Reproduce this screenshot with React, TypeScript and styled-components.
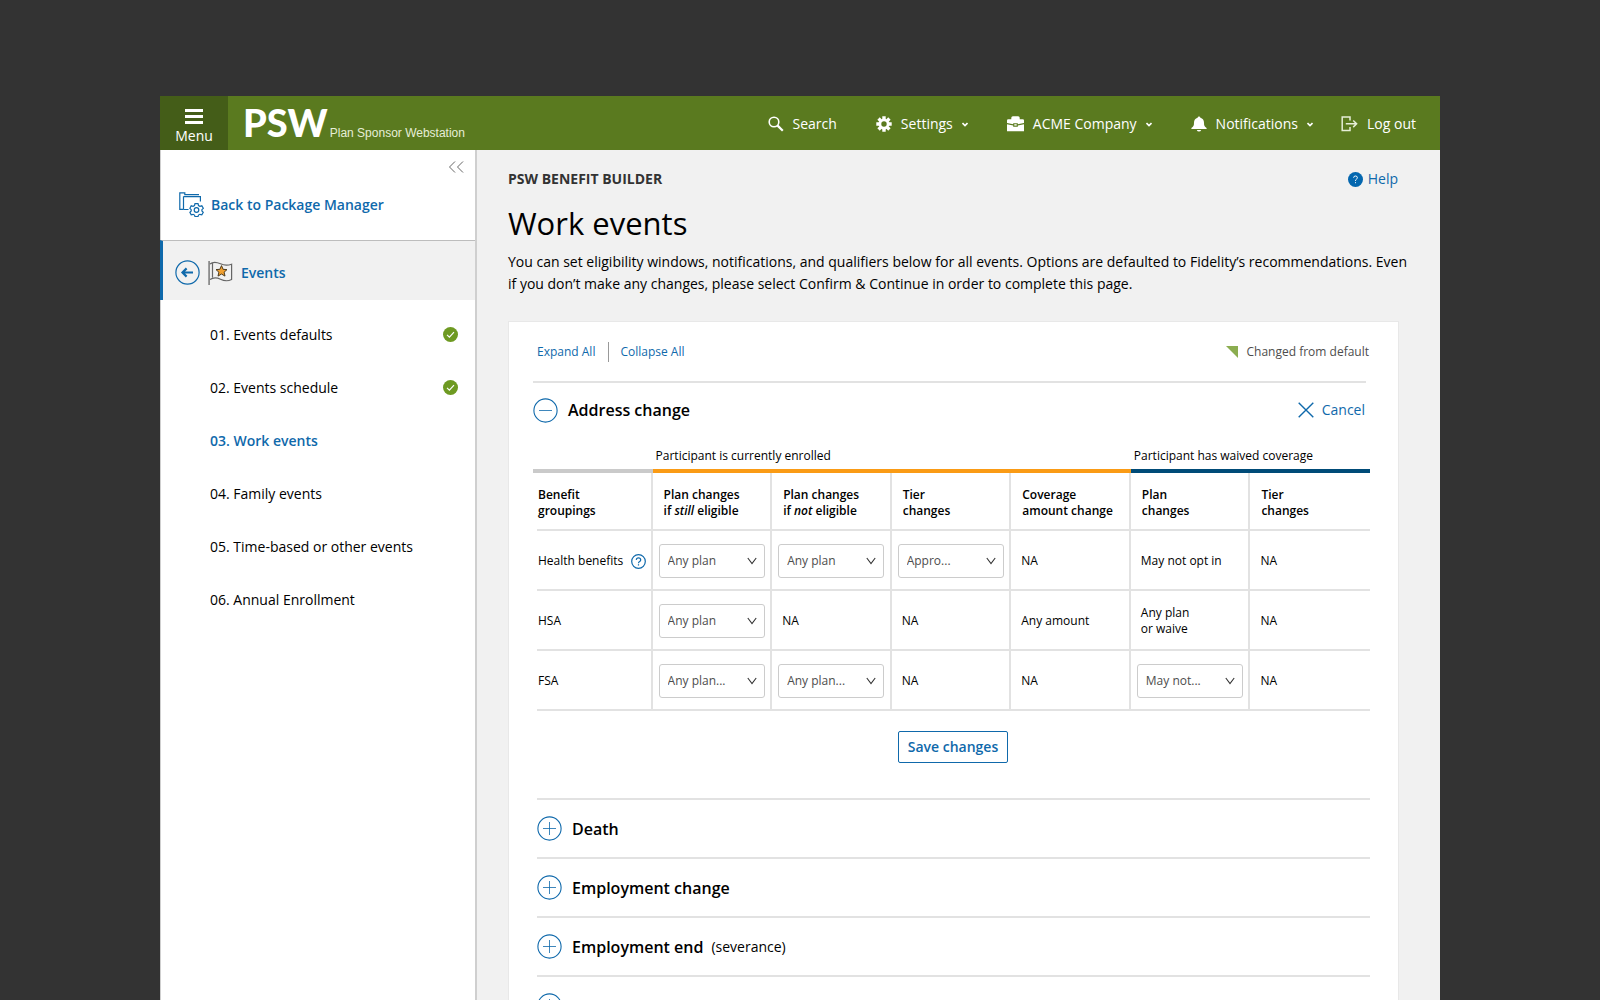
import React from "react";
import styled, { createGlobalStyle, css } from "styled-components";

const color = {
  backdrop: "#333333",
  header: "#5a7a1f",
  headerDark: "#445d18",
  blue: "#0f69ab",
  page: "#f1f1f1",
  line: "#e2e2e2",
  text: "#000000",
  soft: "#4d4d4d",
  orange: "#fa9b15",
  navy: "#004b78",
  silver: "#cacaca",
  done: "#6e9a22",
  flag: "#8bad50",
};

const GlobalStyle = createGlobalStyle`
  *, *::before, *::after { box-sizing: border-box; }
  body {
    margin: 0;
    background: ${color.backdrop};
    color: ${color.text};
    font-family: "Open Sans", "Noto Sans", sans-serif;
    font-size: 14px;
    line-height: 20px;
  }
  h1, h2, h3, p, ul { margin: 0; padding: 0; font-weight: 400; }
  ul { list-style: none; }
  a { color: inherit; text-decoration: none; }
  svg { display: block; flex: none; }
  button, select {
    margin: 0;
    padding: 0;
    border: 0;
    background: none;
    color: inherit;
    font: inherit;
    cursor: pointer;
  }
`;

/* ---------- frame ---------- */

const Backdrop = styled.div`
  height: 100vh;
  padding-top: 96px;
  overflow: hidden;
  display: flex;
  justify-content: center;
`;

const Page = styled.div`
  flex: 1;
  max-width: 1280px;
  display: flex;
  flex-direction: column;
  background: ${color.page};
`;

const Header = styled.header`
  flex: none;
  height: 54px;
  display: flex;
  background: ${color.header};
  color: #ffffff;
`;

const MenuButton = styled.button`
  width: 68px;
  padding-top: 8px;
  display: flex;
  flex-direction: column;
  align-items: center;
  justify-content: center;
  gap: 2px;
  background: ${color.headerDark};
`;

const Brand = styled.div`
  flex: 1;
  padding: 1px 0 0 15px;
  display: flex;
  align-items: baseline;
  gap: 2px;
`;

const BrandMark = styled.strong`
  font: 900 38px/50px Lato, sans-serif;
`;

const BrandName = styled.span`
  color: #e6eed8;
  font: 12px/20px "Liberation Sans", Arial, sans-serif;
  white-space: nowrap;
`;

const Nav = styled.nav`
  padding: 2px 24px 0 0;
  display: flex;
  align-items: center;
  gap: 28px;
`;

const NavGroup = styled.div`
  display: flex;
  gap: 39px;
`;

const NavItem = styled.button`
  display: flex;
  align-items: center;
  gap: 9px;
  white-space: nowrap;
`;

const Body = styled.div`
  flex: 1;
  display: flex;
  align-items: stretch;
`;

/* ---------- sidebar ---------- */

const Sidebar = styled.aside`
  flex: 0 0 317px;
  border-left: 1px solid #cfcfcf;
  border-right: 2px solid #cfcfcf;
  background: #ffffff;
`;

const CollapseRow = styled.div`
  padding: 11px 11px 0 0;
  height: 34px;
  display: flex;
  justify-content: flex-end;
  align-items: flex-start;
  color: #666666;
`;

const BackLink = styled.a`
  height: 56px;
  padding: 0 0 15px 18px;
  display: flex;
  align-items: center;
  gap: 7px;
  color: ${color.blue};
  font-weight: 600;
`;

const SectionLink = styled.a`
  height: 60px;
  margin-left: -1px;
  padding: 4px 0 0 12px;
  display: flex;
  align-items: center;
  gap: 8px;
  border-top: 1px solid #bdbdbd;
  border-left: 3px solid ${color.blue};
  background: ${color.page};
  color: ${color.blue};
  font-weight: 600;
`;

const StepList = styled.ul`
  padding: 8px 17px 0 49px;
`;

const StepLink = styled.a<{ $current?: boolean }>`
  height: 53px;
  display: flex;
  align-items: center;
  justify-content: space-between;
  ${(p) =>
    p.$current &&
    css`
      color: ${color.blue};
      font-weight: 600;
    `}
`;

/* ---------- main ---------- */

const Main = styled.main`
  flex: 1;
  min-width: 0;
  padding: 19px 0 0 31px;
`;

const TopRow = styled.div`
  padding-right: 42px;
  display: flex;
  justify-content: space-between;
`;

const Kicker = styled.p`
  color: #333333;
  font-weight: 700;
`;

const HelpLink = styled.a`
  display: flex;
  align-items: center;
  gap: 5px;
  color: ${color.blue};
`;

const Title = styled.h1`
  margin-top: 12px;
  font-size: 31px;
  line-height: 44px;
`;

const Intro = styled.p`
  margin-top: 6px;
  padding-right: 24px;
  line-height: 22px;
`;

const Card = styled.section`
  margin: 26px 41px 0 0;
  padding: 0 28px 0 24px;
  border: 1px solid #e8e8e8;
  background: #ffffff;
`;

const Toolbar = styled.div`
  height: 61px;
  margin-right: 4px;
  display: flex;
  align-items: center;
  justify-content: space-between;
  border-bottom: 2px solid ${color.line};
  font-size: 12px;
`;

const ToggleAll = styled.div`
  padding-left: 4px;
  display: flex;
  align-items: center;
  color: ${color.blue};

  button + button {
    margin-left: 13px;
    padding-left: 11px;
    border-left: 1px solid #999999;
  }
`;

const Legend = styled.p`
  margin-right: -3px;
  display: flex;
  align-items: center;
  gap: 9px;
  color: ${color.soft};
`;

const OpenHead = styled.div`
  height: 54px;
  padding-right: 5px;
  display: flex;
  align-items: center;
  justify-content: space-between;
`;

const EventButton = styled.button`
  display: flex;
  align-items: center;
  gap: 10px;
`;

const EventName = styled.span`
  font-size: 16px;
  font-weight: 600;
`;

const CancelButton = styled.button`
  display: flex;
  align-items: center;
  gap: 8px;
  color: ${color.blue};
`;

const Grid = styled.table`
  width: 100%;
  table-layout: fixed;
  border-collapse: separate;
  border-spacing: 0;
  font-size: 12px;
  line-height: 16px;
  text-align: left;
`;

const GroupHead = styled.th<{ $bar: string }>`
  height: 36px;
  padding: 6px 0 0 3px;
  border-bottom: 4px solid ${(p) => p.$bar};
  font-weight: 400;
`;

const cell = css`
  border-right: 2px solid ${color.line};
  background: linear-gradient(${color.line}, ${color.line}) 0 100% / 100% 2px no-repeat;
  &:first-child {
    padding-left: 5px;
    background-position: 4px 100%;
  }
  &:last-child {
    border-right: 0;
  }
`;

const ColumnHead = styled.th`
  height: 58px;
  padding: 2px 0 0 11px;
  font-weight: 600;
  ${cell}
`;

const RowHead = styled.th`
  height: 60px;
  padding: 0;
  font-weight: 400;
  ${cell}
`;

const Cell = styled.td<{ $control?: boolean }>`
  height: 60px;
  padding: 0 0 0 ${(p) => (p.$control ? 6 : 10)}px;
  ${cell}
`;

const RowLabel = styled.span`
  display: flex;
  align-items: center;
  gap: 8px;
  white-space: nowrap;
`;

const SelectBox = styled.span`
  width: 106px;
  display: grid;
  grid-template-columns: 1fr 18px;
  align-items: center;
  color: ${color.soft};

  select {
    grid-area: 1 / 1 / 2 / 3;
    height: 34px;
    padding: 0 22px 0 8px;
    appearance: none;
    border: 1px solid #cccccc;
    border-radius: 3px;
    background: #ffffff;
  }
  svg {
    grid-area: 1 / 2;
    pointer-events: none;
  }
`;

const SaveRow = styled.div`
  padding: 20px 0 35px 3px;
  display: flex;
  justify-content: center;
`;

const SaveButton = styled.button`
  height: 32px;
  padding: 0 9px;
  border: 1px solid ${color.blue};
  border-radius: 2px;
  color: ${color.blue};
  font-weight: 600;
`;

const EventRow = styled.li`
  height: 59px;
  margin-left: 4px;
  display: flex;
  align-items: center;
  border-top: 2px solid ${color.line};
`;

const EventNote = styled.span`
  margin-left: -2px;
`;

/* ---------- icons ---------- */

const HamburgerIcon = () => (
  <svg width="18" height="15" viewBox="0 0 18 15" fill="#fff">
    <path d="M0 0h18v3H0zM0 6h18v3H0zM0 12h18v3H0z" />
  </svg>
);

const SearchIcon = () => (
  <svg width="16" height="16" viewBox="0 0 16 16" fill="none" stroke="#fff">
    <circle cx="6" cy="6" r="4.8" strokeWidth="1.6" />
    <path d="M9.600 9.600l5.200 5.200" strokeWidth="2.2" />
  </svg>
);

const GearIcon = () => (
  <svg width="16" height="16" viewBox="-8 -8 16 16" fill="#fff">
    {[0, 45, 90, 135].map((a) => (
      <path key={a} transform={`rotate(${a})`} d="M-1.700-4.800V-7.700H1.700V-4.800ZM-1.700 4.800V7.700H1.700V4.800Z" />
    ))}
    <circle r="4.100" fill="none" stroke="#fff" strokeWidth="2.800" />
  </svg>
);

const BriefcaseIcon = () => (
  <svg width="17" height="16" viewBox="0 0 17 16" fill="#fff">
    <path d="M4.300 3.200V1.800Q4.300.2 5.900.2H11.100Q12.700.2 12.700 1.800V3.200H15.800Q17 3.200 17 4.400V7L10.800 8.300V7.200H6.200V8.300L0 7V4.400Q0 3.200 1.200 3.200Z" />
    <path d="M0 8.300l6.200 1.300V10.800h4.600V9.600L17 8.300V15.200H0Z" />
    <path d="M7.300 8.200h2.400v1.400H7.300z" />
  </svg>
);

const BellIcon = () => (
  <svg width="16" height="16" viewBox="0 0 16 16" fill="#fff">
    <path d="M8 .4C8.800.4 9.300 1 9.400 1.700C11.800 2.400 13 4.300 13 6.800C13 9.800 13.600 10.800 15.600 12V13H.4V12C2.400 10.800 3 9.800 3 6.800C3 4.300 4.200 2.400 6.600 1.700C6.700 1 7.200.4 8 .4ZM5.800 13.900H10.200Q9.700 15.600 8 15.600T5.800 13.900Z" />
  </svg>
);

const SmallChevron = () => (
  <svg width="6" height="5" viewBox="0 0 6 5" fill="none" stroke="#fff" strokeWidth="1.600">
    <path d="M.5 1L3 3.500 5.500 1" />
  </svg>
);

const LogoutIcon = () => (
  <svg width="17" height="16" viewBox="0 0 17 16" fill="none" stroke="#e6eed8" strokeWidth="1.500">
    <path d="M9 4.500V1H1.200V14.600H9V11M4.800 7.800H15.500M12.200 4.500L15.600 7.800L12.200 11.100" />
  </svg>
);

const CollapseIcon = () => (
  <svg width="16" height="12" viewBox="0 0 16 12" fill="none" stroke="currentColor">
    <path d="M7 .5L1.500 6 7 11.500M15 .5L9.500 6 15 11.500" />
  </svg>
);

const PackageIcon = () => (
  <svg width="25" height="25" viewBox="0 0 25 25" fill="none" stroke={color.blue} strokeWidth="1.200">
    <path d="M9.500 17.500H4.300M4 17.400H.8V.8H5.800V2.600H20M4.500 4.600H21.400V9.500M4.500 4.600V17.400" />
    <path d="M16 11.600h3l.5 1.900 1.400.8 1.900-.5 1.500 2.500-1.400 1.400v1.200l1.400 1.400-1.500 2.500-1.900-.5-1.400.8-.5 1.500h-3l-.5-1.500-1.400-.8-1.900.5-1.300-2.500 1.300-1.400v-1.200l-1.300-1.400 1.300-2.500 1.900.5 1.400-.8Z" />
    <circle cx="17.500" cy="18" r="2.300" />
  </svg>
);

const BackArrowIcon = () => (
  <svg width="25" height="25" viewBox="0 0 25 25" fill="none" stroke={color.blue}>
    <circle cx="12.500" cy="12.500" r="11.600" strokeWidth="1.200" />
    <path d="M18 12.500H8M11.600 8.400L7.500 12.500L11.600 16.600" strokeWidth="2.200" />
  </svg>
);

const FlagIcon = () => (
  <svg width="25" height="24" viewBox="0 0 25 24" fill="none">
    <path d="M1.100 0V24" stroke="#8c8c8c" strokeWidth="1.800" />
    <path d="M2 3C5 .5 8.500 1 12.500 2.800C16 4.400 19.500 4.600 23.600 3.200V18.500C19.500 20.500 16 20 12.500 18.200C8.500 16.200 5 16.400 2 18.500M4.500 2V16.500" stroke="#666" strokeWidth="1.200" />
    <path d="M13.500 4.600L15.100 8.300L19 8.600L16.100 11.200L17 15.100L13.500 13L10 15.100L10.900 11.200L8 8.600L11.900 8.300Z" fill="#f0a030" stroke="#4d3a1c" strokeWidth="1" />
  </svg>
);

const CheckIcon = () => (
  <svg width="15" height="15" viewBox="0 0 15 15" fill="none" role="img" aria-label="Complete">
    <circle cx="7.500" cy="7.500" r="7.500" fill={color.done} />
    <path d="M4 7.900L6.400 10.100L11 5.200" stroke="#fff" strokeWidth="1.200" />
  </svg>
);

const HelpSolidIcon = () => (
  <svg width="15" height="15" viewBox="0 0 15 15" fill="none">
    <circle cx="7.500" cy="7.500" r="7.500" fill="#0467af" />
    <path d="M5.600 5.700Q5.700 4 7.500 4T9.400 5.700Q9.400 6.700 8.400 7.200T7.500 8.900M7.500 10.200V11.200" stroke="#fff" />
  </svg>
);

const HelpOutlineIcon = () => (
  <svg width="15" height="15" viewBox="0 0 15 15" fill="none" stroke={color.blue} strokeWidth="1.200">
    <circle cx="7.500" cy="7.500" r="6.800" />
    <path d="M5.300 5.900Q5.400 3.900 7.500 3.900T9.700 5.900Q9.700 6.900 8.600 7.500T7.500 9.200M7.500 10.300V11.500" />
  </svg>
);

const CircleIcon = ({ open }: { open?: boolean }) => (
  <svg width="25" height="25" viewBox="0 0 25 25" fill="none" stroke={color.blue}>
    <circle cx="12.500" cy="12.500" r="11.600" strokeWidth="1.100" />
    <path d={open ? "M6 12.500H19" : "M6 12.500H19M12.500 6V19"} strokeOpacity=".8" />
  </svg>
);

const CloseIcon = () => (
  <svg width="16" height="16" viewBox="0 0 16 16" fill="none" stroke={color.blue} strokeWidth="1.400">
    <path d="M.7.700L15.300 15.300M15.300.7L.7 15.300" />
  </svg>
);

const SelectChevron = () => (
  <svg width="10" height="8" viewBox="0 0 10 8" fill="none" stroke="#333" strokeWidth="1.100">
    <path d="M.8 1L5 6.600L9.200 1" />
  </svg>
);

const CornerFlag = () => (
  <svg width="12" height="12" viewBox="0 0 12 12" fill={color.flag}>
    <path d="M0 0H12V12Z" />
  </svg>
);

/* ---------- data ---------- */

const steps = [
  { label: "01. Events defaults", done: true },
  { label: "02. Events schedule", done: true },
  { label: "03. Work events", current: true },
  { label: "04. Family events" },
  { label: "05. Time-based or other events" },
  { label: "06. Annual Enrollment" },
];

type Entry = string | { pick: string };

const columns: { key: string; label: React.ReactNode }[] = [
  { key: "group", label: <>Benefit<br />groupings</> },
  { key: "still", label: <>Plan changes<br />if <em>still</em> eligible</> },
  { key: "not", label: <>Plan changes<br />if <em>not</em> eligible</> },
  { key: "tier", label: <>Tier<br />changes</> },
  { key: "coverage", label: <>Coverage<br />amount change</> },
  { key: "waived plan", label: <>Plan<br />changes</> },
  { key: "waived tier", label: <>Tier<br />changes</> },
];

const rows: { name: string; help?: boolean; entries: Entry[] }[] = [
  {
    name: "Health benefits",
    help: true,
    entries: [{ pick: "Any plan" }, { pick: "Any plan" }, { pick: "Appro..." }, "NA", "May not opt in", "NA"],
  },
  { name: "HSA", entries: [{ pick: "Any plan" }, "NA", "NA", "Any amount", "Any plan\nor waive", "NA"] },
  { name: "FSA", entries: [{ pick: "Any plan..." }, { pick: "Any plan..." }, "NA", "NA", { pick: "May not..." }, "NA"] },
];

const closedEvents = [
  { name: "Death" },
  { name: "Employment change" },
  { name: "Employment end", note: "(severance)" },
  { name: "Employment end", note: "(without severance)" },
];

const Lines = ({ text }: { text: string }) => (
  <>
    {text.split("\n").map((line, i) => (
      <React.Fragment key={line}>
        {i > 0 && <br />}
        {line}
      </React.Fragment>
    ))}
  </>
);

/* ---------- page ---------- */

export default function App() {
  return (
    <Backdrop>
      <GlobalStyle />
      <Page>
        <Header>
          <MenuButton type="button">
            <HamburgerIcon />
            Menu
          </MenuButton>
          <Brand>
            <BrandMark>PSW</BrandMark>
            <BrandName>Plan Sponsor Webstation</BrandName>
          </Brand>
          <Nav>
            <NavGroup>
              <NavItem type="button"><SearchIcon />Search</NavItem>
              <NavItem type="button"><GearIcon />Settings<SmallChevron /></NavItem>
              <NavItem type="button"><BriefcaseIcon />ACME Company<SmallChevron /></NavItem>
              <NavItem type="button"><BellIcon />Notifications<SmallChevron /></NavItem>
            </NavGroup>
            <NavItem type="button"><LogoutIcon />Log out</NavItem>
          </Nav>
        </Header>
        <Body>
          <Sidebar>
            <CollapseRow>
              <button type="button" aria-label="Collapse sidebar"><CollapseIcon /></button>
            </CollapseRow>
            <BackLink href="#packages"><PackageIcon />Back to Package Manager</BackLink>
            <SectionLink href="#events"><BackArrowIcon /><FlagIcon />Events</SectionLink>
            <StepList>
              {steps.map((s) => (
                <li key={s.label}>
                  <StepLink href="#step" $current={s.current}>
                    {s.label}
                    {s.done && <CheckIcon />}
                  </StepLink>
                </li>
              ))}
            </StepList>
          </Sidebar>
          <Main>
            <TopRow>
              <Kicker>PSW BENEFIT BUILDER</Kicker>
              <HelpLink href="#help"><HelpSolidIcon />Help</HelpLink>
            </TopRow>
            <Title>Work events</Title>
            <Intro>
              You can set eligibility windows, notifications, and qualifiers below for all events. Options are
              defaulted to Fidelity’s recommendations. Even if you don’t make any changes, please select Confirm
              &amp; Continue in order to complete this page.
            </Intro>
            <Card>
              <Toolbar>
                <ToggleAll>
                  <button type="button">Expand All</button>
                  <button type="button">Collapse All</button>
                </ToggleAll>
                <Legend><CornerFlag />Changed from default</Legend>
              </Toolbar>
              <OpenHead>
                <EventButton type="button" aria-expanded="true">
                  <CircleIcon open />
                  <EventName>Address change</EventName>
                </EventButton>
                <CancelButton type="button"><CloseIcon />Cancel</CancelButton>
              </OpenHead>
              <Grid>
                <thead>
                  <tr>
                    <GroupHead $bar={color.silver} />
                    <GroupHead $bar={color.orange} colSpan={4} scope="colgroup">Participant is currently enrolled</GroupHead>
                    <GroupHead $bar={color.navy} colSpan={2} scope="colgroup">Participant has waived coverage</GroupHead>
                  </tr>
                  <tr>
                    {columns.map((c) => (
                      <ColumnHead key={c.key} scope="col">{c.label}</ColumnHead>
                    ))}
                  </tr>
                </thead>
                <tbody>
                  {rows.map((r) => (
                    <tr key={r.name}>
                      <RowHead scope="row">
                        <RowLabel>
                          {r.name}
                          {r.help && (
                            <button type="button" aria-label="About health benefits"><HelpOutlineIcon /></button>
                          )}
                        </RowLabel>
                      </RowHead>
                      {r.entries.map((e, i) =>
                        typeof e === "string" ? (
                          <Cell key={i}><Lines text={e} /></Cell>
                        ) : (
                          <Cell key={i} $control>
                            <SelectBox>
                              <select aria-label={`${r.name}, ${columns[i + 1].key}`}>
                                <option>{e.pick}</option>
                              </select>
                              <SelectChevron />
                            </SelectBox>
                          </Cell>
                        )
                      )}
                    </tr>
                  ))}
                </tbody>
              </Grid>
              <SaveRow>
                <SaveButton type="button">Save changes</SaveButton>
              </SaveRow>
              <ul>
                {closedEvents.map((e, i) => (
                  <EventRow key={i}>
                    <EventButton type="button" aria-expanded="false">
                      <CircleIcon />
                      <EventName>{e.name}</EventName>
                      {e.note && <EventNote>{e.note}</EventNote>}
                    </EventButton>
                  </EventRow>
                ))}
              </ul>
            </Card>
          </Main>
        </Body>
      </Page>
    </Backdrop>
  );
}
